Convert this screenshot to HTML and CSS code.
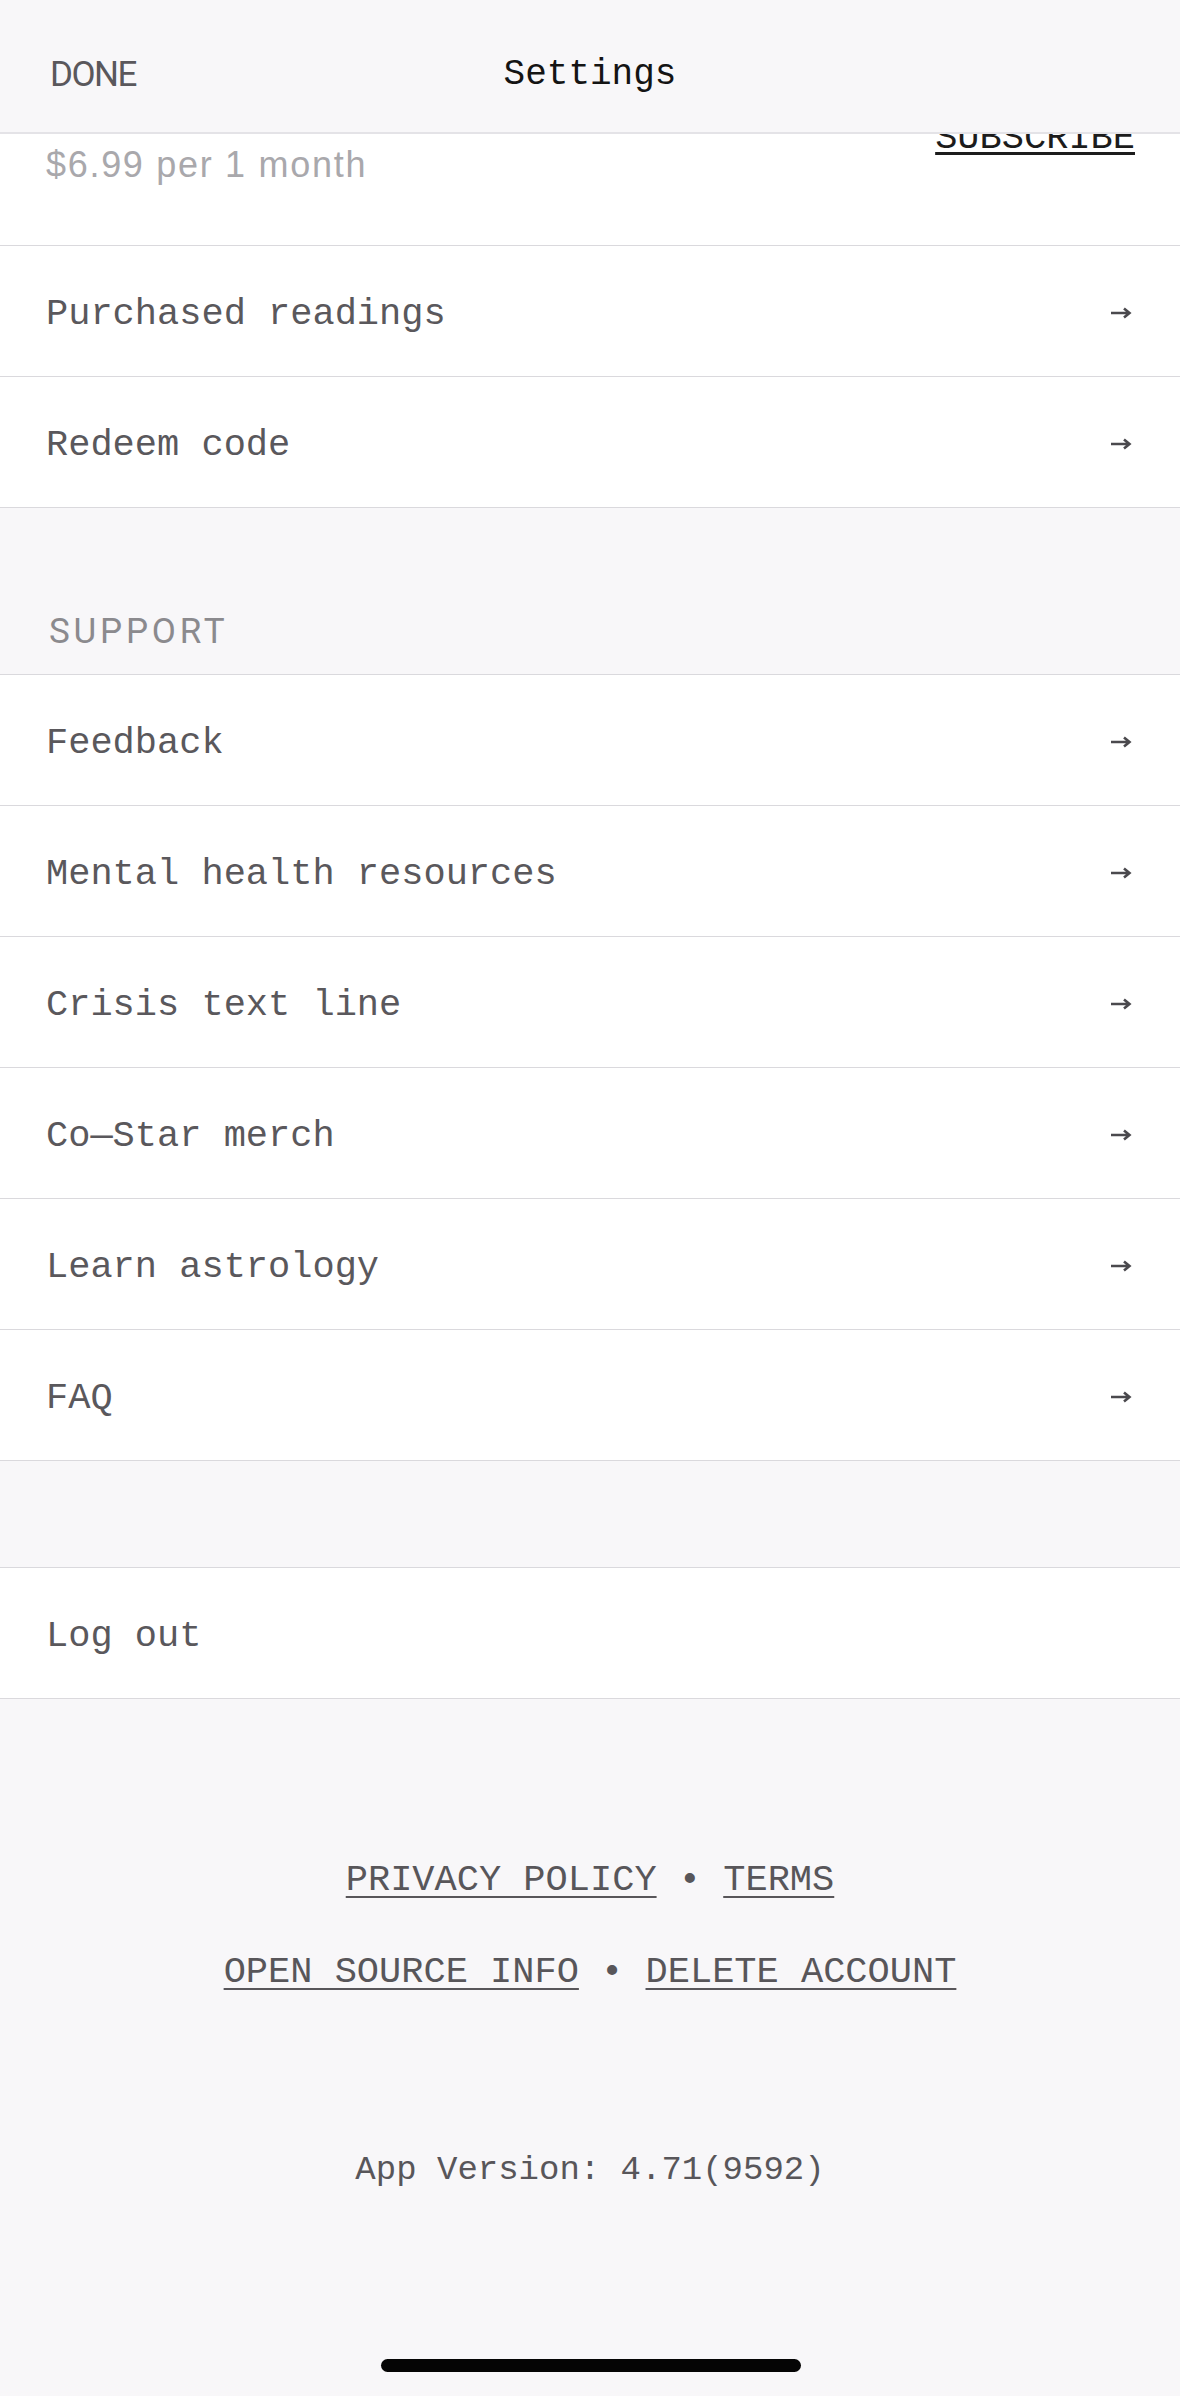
FILE: index.html
```html
<!DOCTYPE html>
<html lang="en">
<head>
<meta charset="utf-8">
<title>Settings</title>
<link rel="stylesheet" href="styles.css">
</head>
<body>
<header class="topbar">
  <div class="topbar-left"><span class="done">DONE</span></div>
  <div class="topbar-title">Settings</div>
  <div class="topbar-right"></div>
</header>

<main class="page">
  <section class="plan-card">
    <div class="plan-price">$6.99 per 1 month</div>
    <a class="plan-subscribe">SUBSCRIBE</a>
  </section>

  <ul class="list">
    <li class="row"><span class="row-label">Purchased readings</span><svg class="arrow" viewBox="0 0 22 14" width="22" height="14"><path d="M1 7H19M14 2.5L19.5 7L14 11.5"/></svg></li>
    <li class="row"><span class="row-label">Redeem code</span><svg class="arrow" viewBox="0 0 22 14" width="22" height="14"><path d="M1 7H19M14 2.5L19.5 7L14 11.5"/></svg></li>
  </ul>

  <div class="section-head"><span class="section-title">SUPPORT</span></div>

  <ul class="list list-top">
    <li class="row"><span class="row-label">Feedback</span><svg class="arrow" viewBox="0 0 22 14" width="22" height="14"><path d="M1 7H19M14 2.5L19.5 7L14 11.5"/></svg></li>
    <li class="row"><span class="row-label">Mental health resources</span><svg class="arrow" viewBox="0 0 22 14" width="22" height="14"><path d="M1 7H19M14 2.5L19.5 7L14 11.5"/></svg></li>
    <li class="row"><span class="row-label">Crisis text line</span><svg class="arrow" viewBox="0 0 22 14" width="22" height="14"><path d="M1 7H19M14 2.5L19.5 7L14 11.5"/></svg></li>
    <li class="row"><span class="row-label">Co—Star merch</span><svg class="arrow" viewBox="0 0 22 14" width="22" height="14"><path d="M1 7H19M14 2.5L19.5 7L14 11.5"/></svg></li>
    <li class="row"><span class="row-label">Learn astrology</span><svg class="arrow" viewBox="0 0 22 14" width="22" height="14"><path d="M1 7H19M14 2.5L19.5 7L14 11.5"/></svg></li>
    <li class="row"><span class="row-label">FAQ</span><svg class="arrow" viewBox="0 0 22 14" width="22" height="14"><path d="M1 7H19M14 2.5L19.5 7L14 11.5"/></svg></li>
  </ul>

  <div class="spacer"></div>

  <ul class="list list-top">
    <li class="row"><span class="row-label">Log out</span></li>
  </ul>

  <footer class="footer">
    <div class="footer-links">
      <p class="footer-line"><a class="footer-link">PRIVACY POLICY</a> • <a class="footer-link">TERMS</a></p>
      <p class="footer-line"><a class="footer-link">OPEN SOURCE INFO</a> • <a class="footer-link">DELETE ACCOUNT</a></p>
    </div>
    <p class="version">App Version: 4.71(9592)</p>
  </footer>
</main>

<div class="home-indicator"></div>
</body>
</html>
```

FILE: styles.css
```css
* {
  box-sizing: border-box;
}

html, body {
  margin: 0;
  padding: 0;
}

body {
  background: #f8f7f9;
  font-family: "Liberation Mono", "DejaVu Sans Mono", monospace;
  color: #58565a;
  min-height: 2396px;
  position: relative;
}

/* Header overlays the scrolled content */
.topbar {
  position: absolute;
  top: 0;
  left: 0;
  right: 0;
  height: 134px;
  padding-top: 16px;
  background: #f8f7f9;
  border-bottom: 2px solid #e4e3e7;
  display: grid;
  grid-template-columns: 1fr auto 1fr;
  align-items: center;
  z-index: 10;
}

.topbar-left {
  padding-left: 50px;
}

.done {
  font-family: Roboto, "Liberation Sans", sans-serif;
  font-size: 35px;
  letter-spacing: -1.5px;
  color: #5a585c;
}

.topbar-title {
  font-family: "Liberation Mono", monospace;
  font-size: 36px;
  color: #141414;
}

/* Content */
.page {
  display: flex;
  flex-direction: column;
}

.plan-card {
  height: 246px;
  background: #ffffff;
  border-bottom: 1px solid #dad9dd;
  display: flex;
  justify-content: space-between;
  align-items: flex-start;
  padding: 116px 45px 0 46px;
}

.plan-price {
  margin-top: 27px;
  font-family: "Liberation Sans", Arial, sans-serif;
  font-size: 36px;
  line-height: 44px;
  letter-spacing: 1.7px;
  color: #a9a8ac;
}

.plan-subscribe {
  font-family: "Liberation Mono", monospace;
  font-size: 37px;
  line-height: 44px;
  color: #1c1c1c;
  text-decoration: underline;
  text-decoration-thickness: 3px;
  text-underline-offset: 4px;
}

.list {
  list-style: none;
  margin: 0;
  padding: 0;
  background: #ffffff;
}

.list-top {
  border-top: 1px solid #dad9dd;
}

.row {
  height: 131px;
  border-bottom: 1px solid #dad9dd;
  display: flex;
  align-items: center;
  justify-content: space-between;
  padding: 6px 48px 0 46px;
}

.row-label {
  font-size: 37px;
  color: #5a585c;
}

.arrow {
  fill: none;
  stroke: #4a494d;
  stroke-width: 2.6;
  stroke-linecap: butt;
  stroke-linejoin: miter;
  position: relative;
  top: -1px;
}

.section-head {
  height: 166px;
  display: flex;
  align-items: flex-end;
  padding: 0 0 22px 49px;
}

.section-title {
  font-family: Roboto, "Liberation Sans", sans-serif;
  font-size: 35px;
  letter-spacing: 3.8px;
  color: #8b8a8e;
}

.spacer {
  height: 106px;
}

/* Footer */
.footer {
  padding-top: 151px;
  display: flex;
  flex-direction: column;
  align-items: center;
}

.footer-links {
  display: flex;
  flex-direction: column;
  align-items: center;
  gap: 32px;
}

.footer-line {
  margin: 0;
  font-size: 37px;
  line-height: 60px;
  color: #58565a;
}

.footer-link {
  text-decoration: underline;
  text-decoration-thickness: 2px;
  text-underline-offset: 6px;
}

.version {
  margin: 138px 0 0;
  font-size: 34px;
  line-height: 60px;
  color: #58565a;
}

.home-indicator {
  position: absolute;
  left: 381px;
  top: 2359px;
  width: 420px;
  height: 13px;
  border-radius: 7px;
  background: #050505;
}
```
